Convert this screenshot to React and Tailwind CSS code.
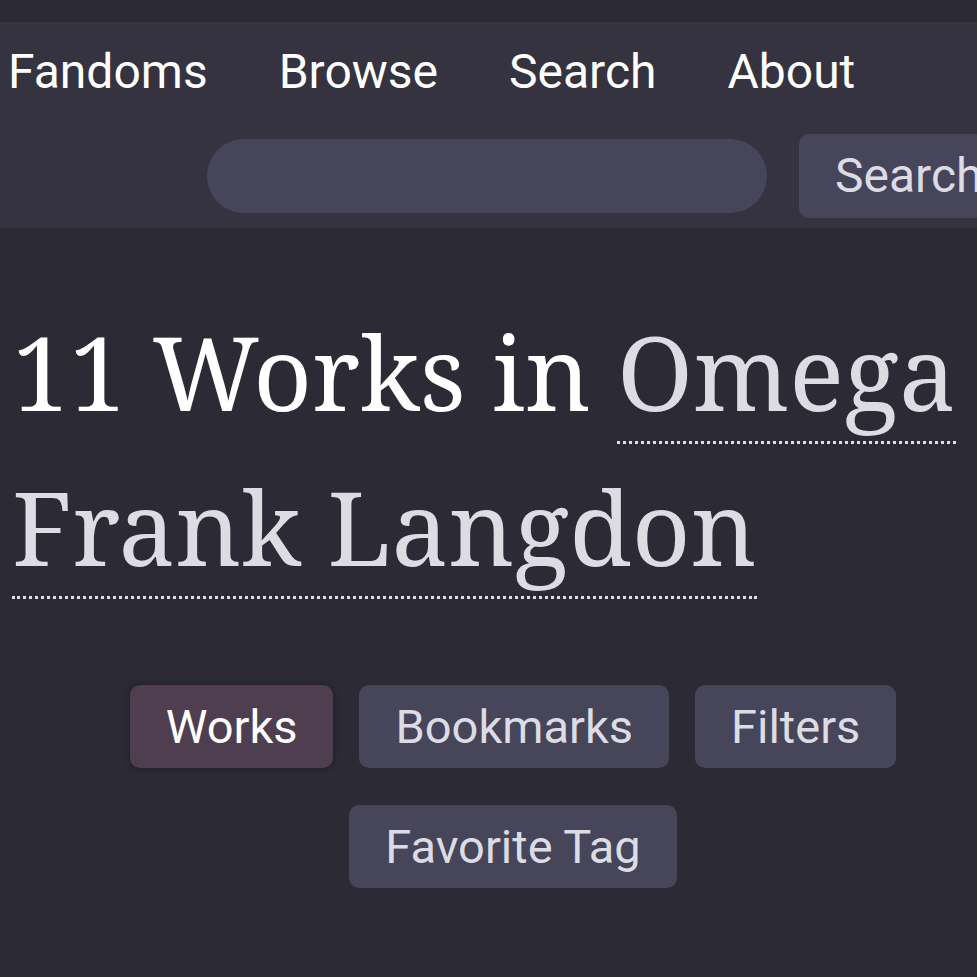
export default function App() {
    const tabs = ['Bookmarks', 'Filters', 'Favorite Tag'];

    return (
        <div className="min-h-[977px] bg-[#2c2a34] pt-[22px] font-['Roboto',sans-serif] overflow-hidden">
            <header className="bg-[#34333f] h-[206px]">
                <nav className="flex gap-[71px] pl-[8px] pt-[22px] text-[48px] leading-[56px] text-white">
                    <a>Fandoms</a>
                    <a>Browse</a>
                    <a>Search</a>
                    <a>About</a>
                </nav>
                <div className="flex items-center mt-[34px] pl-[207px] gap-[32px] whitespace-nowrap">
                    <div className="w-[560px] h-[74px] rounded-full bg-[#474559] shrink-0"></div>
                    <button className="h-[84px] px-[36px] rounded-[10px] bg-[#474559] text-[48px] text-[#dcdce4] shrink-0">
                        Search
                    </button>
                </div>
            </header>

            <main className="pl-[12px] pb-[80px]">
                <h2 className="mt-[66px] font-['Noto_Serif','DejaVu_Serif',serif] text-[102px] leading-[155px] text-white">
                    11 Works in{' '}
                    <a className="text-[#dcdde2] border-b-[3px] border-dotted border-[#dcdde2]">Omega Frank Langdon</a>
                </h2>

                <ul className="flex flex-wrap justify-center gap-x-[26px] gap-y-[37px] mt-[81px] pl-[37px] text-[47px] leading-[57px]">
                    <li className="px-[36px] py-[13px] rounded-[10px] bg-[#4f3d50] text-white shadow-[0_0_6px_rgba(0,0,0,0.35)]">
                        Works
                    </li>
                    {tabs.map((t) => (
                        <li key={t} className="px-[36px] py-[13px] rounded-[10px] bg-[#474559] text-[#dcdce4]">
                            {t}
                        </li>
                    ))}
                </ul>
            </main>
        </div>
    );
}
